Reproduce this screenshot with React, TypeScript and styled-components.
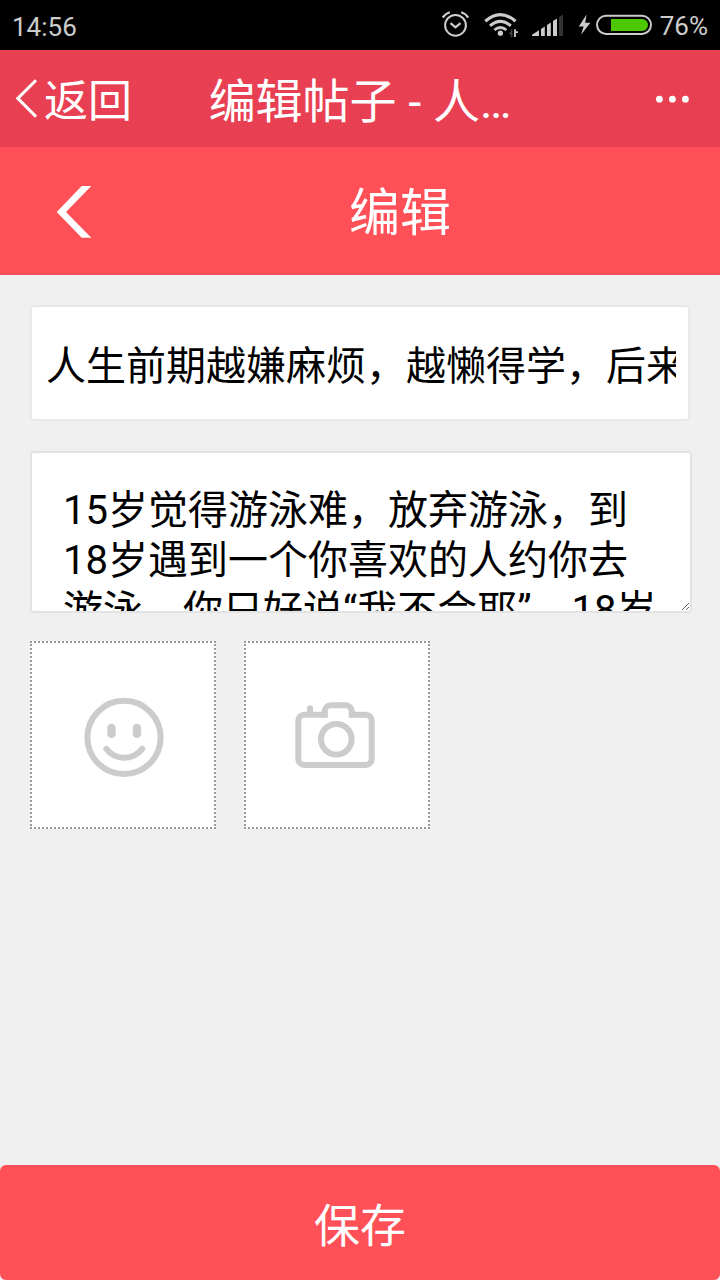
import React from 'react';
import styled, { createGlobalStyle } from 'styled-components';

const GlobalStyle = createGlobalStyle`
  *, *::before, *::after { box-sizing: border-box; }
  body { margin: 0; background: #f0f0f0; }
  body, button, input, textarea {
    font-family: Roboto, "Noto Sans CJK SC", sans-serif;
    font-weight: 400;
  }
`;

const Page = styled.div`
  display: flex;
  flex-direction: column;
  min-height: 100vh;
`;

const StatusBar = styled.div`
  display: flex;
  align-items: center;
  justify-content: space-between;
  height: 50px;
  padding: 0 12px;
  background: #000;
  color: #ccc;
  font-size: 26px;
`;

const Clock = styled.span`
  padding-top: 4px;
`;

const StatusIcons = styled.div`
  display: flex;
  align-items: center;
  gap: 14px;
`;

const Power = styled.div`
  display: flex;
  align-items: center;
  gap: 4px;
`;

const Level = styled.span`
  margin-left: 4px;
  padding-top: 2px;
`;

const AppBar = styled.header`
  display: grid;
  grid-template-columns: 1fr auto 1fr;
  align-items: center;
  height: 97px;
  padding: 0 16px;
  background: #e84052;
  color: #fff;
`;

const AppTitle = styled.h1`
  margin: 0;
  padding-top: 6px;
  font-size: 47px;
  font-weight: 400;
  line-height: 60px;
`;

const BarButton = styled.button<{ $end?: boolean }>`
  display: flex;
  align-items: center;
  gap: 6px;
  justify-self: ${(p) => (p.$end ? 'end' : 'start')};
  padding: 0;
  border: 0;
  background: none;
  color: inherit;
  font-size: 44px;
  line-height: 60px;
`;

const BarLabel = styled.span`
  padding-top: 6px;
`;

const PageBar = styled.div`
  display: flex;
  align-items: center;
  height: 128px;
  background: #ff5057;
  color: #fff;
`;

const BackButton = styled.button`
  display: flex;
  justify-content: flex-end;
  width: 92px;
  margin-right: -12px;
  padding: 0;
  border: 0;
  background: none;
  color: inherit;
`;

const PageTitle = styled.h2`
  flex: 1;
  margin: 0;
  padding-top: 6px;
  font-size: 51px;
  font-weight: 400;
  line-height: 60px;
  text-align: center;
`;

const Form = styled.form`
  display: flex;
  flex: 1;
  flex-direction: column;
`;

const Fields = styled.div`
  display: flex;
  flex: 1;
  flex-direction: column;
  padding: 30px 28px 30px 30px;
`;

const TitleInput = styled.input`
  height: 116px;
  margin: 0 2px 30px 0;
  padding: 0 12px 0 14px;
  border: 2px solid #e9e9e9;
  border-radius: 4px;
  outline: 0;
  background: #fff;
  color: #000;
  font-size: 40px;
`;

const BodyInput = styled.textarea`
  display: block;
  height: 162px;
  margin-bottom: 28px;
  padding: 33px 30px 0 31px;
  border: 2px solid #e3e3e3;
  border-radius: 4px;
  outline: 0;
  overflow: hidden;
  resize: both;
  background: #fff;
  color: #000;
  font-size: 40px;
  line-height: 50px;
`;

const Attachments = styled.div`
  display: flex;
  gap: 28px;
`;

const Tile = styled.button`
  width: 186px;
  height: 188px;
  padding: 0;
  border: 2px dotted #999;
  background: #fff;
  color: #ccc;

  svg { display: block; }
`;

const SaveButton = styled.button`
  height: 115px;
  padding: 0 0 2px;
  border: 0;
  border-radius: 6px;
  background: #ff5057;
  color: #fff;
  font-size: 46px;
`;

const AlarmIcon = () => (
  <svg width="28" height="50" viewBox="444 0 28 50" fill="none" stroke="currentColor" strokeWidth="2" aria-hidden="true">
    <circle cx="457.5" cy="25.3" r="10.4" />
    <path d="M452.5 23.2l5 4.2 5-4.2" strokeWidth="2.2" />
    <path d="M444.8 17.6q2.4-4 7-5.4M470.2 17.6q-2.4-4-7-5.4" strokeWidth="2.2" />
  </svg>
);

const WifiIcon = () => (
  <svg width="34" height="50" viewBox="486 0 34 50" fill="none" stroke="currentColor" aria-hidden="true">
    <path d="M487.3 21.3q15-13.400 30.200 0" strokeWidth="3.2" />
    <path d="M492 25.8q10.4-8.8 20.8 0" strokeWidth="3" />
    <path d="M496.4 30q6-5 12 0" strokeWidth="2.8" />
    <circle cx="502.4" cy="33.2" r="2.6" fill="currentColor" stroke="none" />
    <path d="M513.6 29.5v7.5M511.2 33.4h2.4" stroke="#444" strokeWidth="1.6" />
    <path d="M517 29.3v7.7M517 32.2h3" strokeWidth="1.8" />
  </svg>
);

const SignalIcon = () => (
  <svg width="32" height="50" viewBox="533 0 32 50" fill="currentColor" aria-hidden="true">
    <path d="M533 36v-1.200l7-4.600V36zM542 36v-7l3.800-2.400V36zM548 36V25l3.800-2.400V36zM554 36V21l4-2.400V36z" />
    <path d="M560 36V17l4-2.400V36z" fill="#333" />
  </svg>
);

const BoltIcon = () => (
  <svg width="14" height="50" viewBox="578 0 14 50" fill="currentColor" aria-hidden="true">
    <path d="M586.6 14.5L578.8 26.4h4.8l-2.6 8.4 9.4-12h-5.2z" />
  </svg>
);

const BatteryIcon = () => (
  <svg width="56" height="50" viewBox="596 0 56 50" fill="none" aria-hidden="true">
    <rect x="597" y="15.7" width="54" height="18.2" rx="9.1" stroke="currentColor" strokeWidth="2" />
    <path d="M611 19h31a6 6 0 0 1 0 12h-31z" fill="#4bc800" />
  </svg>
);

const ThinChevron = () => (
  <svg width="22" height="40" viewBox="16 78 22 40" fill="none" stroke="currentColor" strokeWidth="3" aria-hidden="true">
    <path d="M36 79.2L17.8 97.4l18.200 18.200" />
  </svg>
);

const MoreIcon = () => (
  <svg width="50" height="40" viewBox="654 78 50 40" fill="currentColor" aria-hidden="true">
    <circle cx="659.4" cy="98.2" r="3.4" />
    <circle cx="672.4" cy="98.2" r="3.4" />
    <circle cx="685.4" cy="98.2" r="3.4" />
  </svg>
);

const BoldChevron = () => (
  <svg width="36" height="54" viewBox="56 184 36 54" fill="currentColor" aria-hidden="true">
    <path d="M81.7 186h9.6L66 212l25.3 25.7h-9.6L56.7 212z" />
  </svg>
);

const SmileIcon = () => (
  <svg width="182" height="184" viewBox="0 0 182 184" fill="none" stroke="currentColor" strokeWidth="6" strokeLinecap="round" aria-hidden="true">
    <circle cx="92" cy="94.4" r="36.6" />
    <path d="M79.5 84.9v6M104.9 84.9v6" strokeWidth="8.4" />
    <path d="M74.3 105.8Q81 114.8 92 114.8T110.2 105.8" />
  </svg>
);

const CameraIcon = () => (
  <svg width="182" height="184" viewBox="0 0 182 184" fill="none" stroke="currentColor" strokeWidth="6" aria-hidden="true">
    <path d="M81.6 71.7H58.3a6 6 0 0 0-6 6V116a6 6 0 0 0 6 6h61.4a6 6 0 0 0 6-6V77.7a6 6 0 0 0-6-6H103" />
    <path d="M78.7 74.6V68.3a6 6 0 0 1 6-6h15.100a6 6 0 0 1 6 6V74.600" />
    <path d="M64 71V65.3" strokeLinecap="round" />
    <circle cx="90.3" cy="96.3" r="15.300" />
  </svg>
);

const TITLE = '人生前期越嫌麻烦，越懒得学，后来就越可能错过让你动心的人和事';
const BODY =
  '15岁觉得游泳难，放弃游泳，到18岁遇到一个你喜欢的人约你去游泳，你只好说“我不会耶”。18岁觉得英文难，放弃英文';

export default function App() {
  return (
    <Page>
      <GlobalStyle />
      <StatusBar>
        <Clock>14:56</Clock>
        <StatusIcons>
          <AlarmIcon />
          <WifiIcon />
          <SignalIcon />
          <Power>
            <BoltIcon />
            <BatteryIcon />
            <Level>76%</Level>
          </Power>
        </StatusIcons>
      </StatusBar>
      <AppBar>
        <BarButton type="button">
          <ThinChevron />
          <BarLabel>返回</BarLabel>
        </BarButton>
        <AppTitle>编辑帖子 - 人…</AppTitle>
        <BarButton type="button" $end aria-label="更多">
          <MoreIcon />
        </BarButton>
      </AppBar>
      <PageBar>
        <BackButton type="button" aria-label="返回">
          <BoldChevron />
        </BackButton>
        <PageTitle>编辑</PageTitle>
      </PageBar>
      <Form onSubmit={(e) => e.preventDefault()}>
        <Fields>
          <TitleInput aria-label="标题" defaultValue={TITLE} />
          <BodyInput aria-label="内容" defaultValue={BODY} />
          <Attachments>
            <Tile type="button" aria-label="表情">
              <SmileIcon />
            </Tile>
            <Tile type="button" aria-label="图片">
              <CameraIcon />
            </Tile>
          </Attachments>
        </Fields>
        <SaveButton type="submit">保存</SaveButton>
      </Form>
    </Page>
  );
}
